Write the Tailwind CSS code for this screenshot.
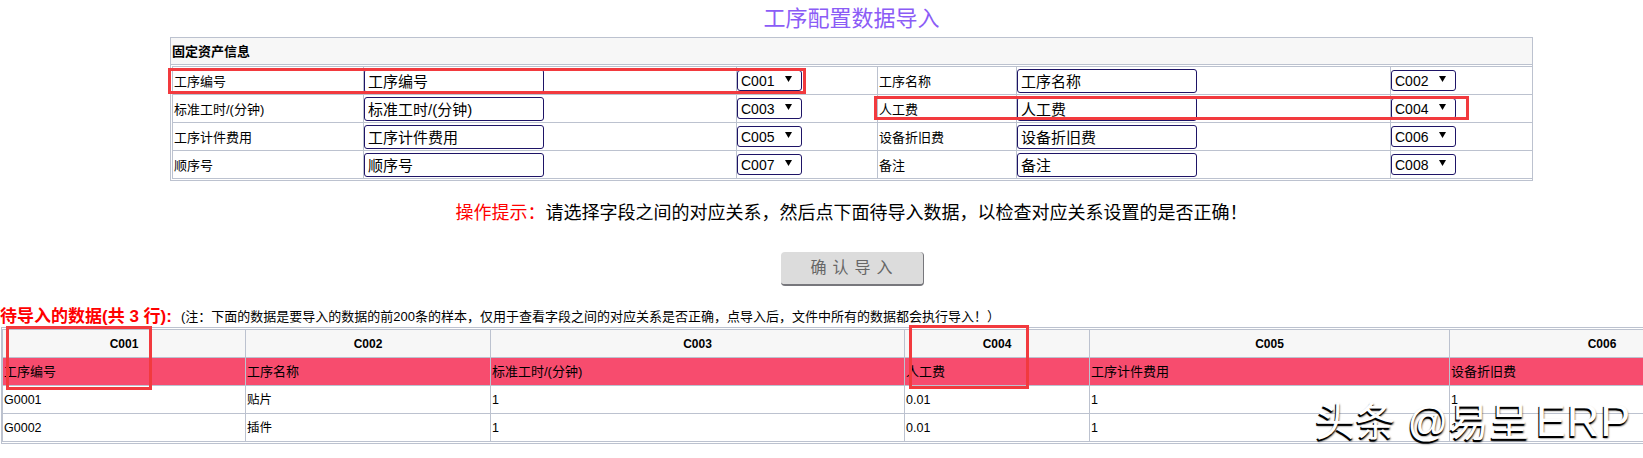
<!DOCTYPE html>
<html lang="zh-CN">
<head>
    <meta charset="UTF-8">
    <title>工序配置数据导入</title>
    <script src="https://cdn.jsdelivr.net/npm/@tailwindcss/browser@4"></script>
</head>
<body class="bg-white text-black font-['Liberation_Sans','Noto_Sans_CJK_SC',sans-serif]">
<div class="relative w-[1643px] h-[458px] overflow-hidden">

    <!-- config panel -->
    <div class="ml-[170px] w-[1363px]">
        <h1 class="h-[37px] flex items-center justify-center text-[22px] font-normal text-[#8b5cf6]">工序配置数据导入</h1>
        <div class="border border-[#bcc2cf] h-[144px]">
            <div class="h-[27px] bg-[#f7f7f7] border-b border-[#bcc2cf] flex items-center pl-[1px] pt-[2px] text-[13px] font-bold">固定资产信息</div>
            <table class="mt-[1px] ml-[1px] w-[1360px] table-fixed border-collapse border border-[#bcc2cf] text-[13px]">
                <colgroup>
                    <col class="w-[191px]"><col class="w-[373px]"><col class="w-[141px]">
                    <col class="w-[139px]"><col class="w-[374px]"><col class="w-[142px]">
                </colgroup>
                <tbody>
                    <tr class="h-[28px]">
                        <td class="border border-[#bcc2cf] pl-px pt-[3px]">工序编号</td>
                        <td class="border border-[#bcc2cf]"><input value="工序编号" class="block w-[180px] h-[24px] border border-[#1e1466] rounded-[3px] pl-[3px] text-[15px]"></td>
                        <td class="border border-[#bcc2cf]">
                            <div class="relative w-[65px]">
                                <select class="block appearance-none w-[65px] h-[21px] border border-[#1e1466] rounded-[3px] pl-[3px] text-[14px] bg-white"><option>C001</option></select>
                                <svg class="absolute right-[10px] top-[6px]" width="7" height="6" viewBox="0 0 7 6"><path d="M0 0h7L3.5 6z" fill="#000"/></svg>
                            </div>
                        </td>
                        <td class="border border-[#bcc2cf] pl-px pt-[3px]">工序名称</td>
                        <td class="border border-[#bcc2cf]"><input value="工序名称" class="block w-[180px] h-[24px] border border-[#1e1466] rounded-[3px] pl-[3px] text-[15px]"></td>
                        <td class="border border-[#bcc2cf]">
                            <div class="relative w-[65px]">
                                <select class="block appearance-none w-[65px] h-[21px] border border-[#1e1466] rounded-[3px] pl-[3px] text-[14px] bg-white"><option>C002</option></select>
                                <svg class="absolute right-[10px] top-[6px]" width="7" height="6" viewBox="0 0 7 6"><path d="M0 0h7L3.5 6z" fill="#000"/></svg>
                            </div>
                        </td>
                    </tr>
                    <tr class="h-[28px]">
                        <td class="border border-[#bcc2cf] pl-px pt-[3px]">标准工时/(分钟)</td>
                        <td class="border border-[#bcc2cf]"><input value="标准工时/(分钟)" class="block w-[180px] h-[24px] border border-[#1e1466] rounded-[3px] pl-[3px] text-[15px]"></td>
                        <td class="border border-[#bcc2cf]">
                            <div class="relative w-[65px]">
                                <select class="block appearance-none w-[65px] h-[21px] border border-[#1e1466] rounded-[3px] pl-[3px] text-[14px] bg-white"><option>C003</option></select>
                                <svg class="absolute right-[10px] top-[6px]" width="7" height="6" viewBox="0 0 7 6"><path d="M0 0h7L3.5 6z" fill="#000"/></svg>
                            </div>
                        </td>
                        <td class="border border-[#bcc2cf] pl-px pt-[3px]">人工费</td>
                        <td class="border border-[#bcc2cf]"><input value="人工费" class="block w-[180px] h-[24px] border border-[#1e1466] rounded-[3px] pl-[3px] text-[15px]"></td>
                        <td class="border border-[#bcc2cf]">
                            <div class="relative w-[65px]">
                                <select class="block appearance-none w-[65px] h-[21px] border border-[#1e1466] rounded-[3px] pl-[3px] text-[14px] bg-white"><option>C004</option></select>
                                <svg class="absolute right-[10px] top-[6px]" width="7" height="6" viewBox="0 0 7 6"><path d="M0 0h7L3.5 6z" fill="#000"/></svg>
                            </div>
                        </td>
                    </tr>
                    <tr class="h-[28px]">
                        <td class="border border-[#bcc2cf] pl-px pt-[3px]">工序计件费用</td>
                        <td class="border border-[#bcc2cf]"><input value="工序计件费用" class="block w-[180px] h-[24px] border border-[#1e1466] rounded-[3px] pl-[3px] text-[15px]"></td>
                        <td class="border border-[#bcc2cf]">
                            <div class="relative w-[65px]">
                                <select class="block appearance-none w-[65px] h-[21px] border border-[#1e1466] rounded-[3px] pl-[3px] text-[14px] bg-white"><option>C005</option></select>
                                <svg class="absolute right-[10px] top-[6px]" width="7" height="6" viewBox="0 0 7 6"><path d="M0 0h7L3.5 6z" fill="#000"/></svg>
                            </div>
                        </td>
                        <td class="border border-[#bcc2cf] pl-px pt-[3px]">设备折旧费</td>
                        <td class="border border-[#bcc2cf]"><input value="设备折旧费" class="block w-[180px] h-[24px] border border-[#1e1466] rounded-[3px] pl-[3px] text-[15px]"></td>
                        <td class="border border-[#bcc2cf]">
                            <div class="relative w-[65px]">
                                <select class="block appearance-none w-[65px] h-[21px] border border-[#1e1466] rounded-[3px] pl-[3px] text-[14px] bg-white"><option>C006</option></select>
                                <svg class="absolute right-[10px] top-[6px]" width="7" height="6" viewBox="0 0 7 6"><path d="M0 0h7L3.5 6z" fill="#000"/></svg>
                            </div>
                        </td>
                    </tr>
                    <tr class="h-[28px]">
                        <td class="border border-[#bcc2cf] pl-px pt-[3px]">顺序号</td>
                        <td class="border border-[#bcc2cf]"><input value="顺序号" class="block w-[180px] h-[24px] border border-[#1e1466] rounded-[3px] pl-[3px] text-[15px]"></td>
                        <td class="border border-[#bcc2cf]">
                            <div class="relative w-[65px]">
                                <select class="block appearance-none w-[65px] h-[21px] border border-[#1e1466] rounded-[3px] pl-[3px] text-[14px] bg-white"><option>C007</option></select>
                                <svg class="absolute right-[10px] top-[6px]" width="7" height="6" viewBox="0 0 7 6"><path d="M0 0h7L3.5 6z" fill="#000"/></svg>
                            </div>
                        </td>
                        <td class="border border-[#bcc2cf] pl-px pt-[3px]">备注</td>
                        <td class="border border-[#bcc2cf]"><input value="备注" class="block w-[180px] h-[24px] border border-[#1e1466] rounded-[3px] pl-[3px] text-[15px]"></td>
                        <td class="border border-[#bcc2cf]">
                            <div class="relative w-[65px]">
                                <select class="block appearance-none w-[65px] h-[21px] border border-[#1e1466] rounded-[3px] pl-[3px] text-[14px] bg-white"><option>C008</option></select>
                                <svg class="absolute right-[10px] top-[6px]" width="7" height="6" viewBox="0 0 7 6"><path d="M0 0h7L3.5 6z" fill="#000"/></svg>
                            </div>
                        </td>
                    </tr>
                </tbody>
            </table>
        </div>

        <!-- hint and confirm -->
        <p class="mt-[19px] h-[26px] flex items-center justify-center text-[18px] leading-none"><span class="text-[#ff0000]">操作提示&#65306;</span><span>请选择字段之间的对应关系&#65292;然后点下面待导入数据&#65292;以检查对应关系设置的是否正确&#65281;</span></p>
        <div class="mt-[26px] flex justify-center pl-[1px]">
            <button class="w-[143px] h-[34px] bg-[#dcdcdc] rounded-[4px] border-r border-b-2 border-[#77777c] text-[#666666] text-[16px] tracking-[6px] pl-[6px]">确认导入</button>
        </div>
    </div>

    <!-- data to import -->
    <div class="mt-[21px] h-[20px] flex items-center whitespace-nowrap">
        <span class="text-[17px] font-bold text-[#ff0000]">待导入的数据(共 3 行):</span>
        <span class="ml-[9px] text-[13px]">(注&#65306;下面的数据是要导入的数据的前200条的样本&#65292;仅用于查看字段之间的对应关系是否正确&#65292;点导入后&#65292;文件中所有的数据都会执行导入&#65281;&#65289;</span>
    </div>
    <div class="ml-px w-[1800px] border-y border-l border-[#bcc2cf] pt-px pb-px">
        <table class="w-[1752px] table-fixed border-collapse border border-[#bcc2cf] text-[13px]">
            <colgroup>
                <col class="w-[243px]"><col class="w-[245px]"><col class="w-[414px]">
                <col class="w-[185px]"><col class="w-[360px]"><col class="w-[305px]">
            </colgroup>
            <tbody>
                <tr class="h-[28px] bg-[#f7f7f7] text-[12px] font-bold text-center">
                    <td class="border border-[#bcc2cf]">C001</td>
                    <td class="border border-[#bcc2cf]">C002</td>
                    <td class="border border-[#bcc2cf]">C003</td>
                    <td class="border border-[#bcc2cf]">C004</td>
                    <td class="border border-[#bcc2cf]">C005</td>
                    <td class="border border-[#bcc2cf]">C006</td>
                </tr>
                <tr class="h-[28px] bg-[#f74c6e]">
                    <td class="border border-[#bcc2cf] pl-px">工序编号</td>
                    <td class="border border-[#bcc2cf] pl-px">工序名称</td>
                    <td class="border border-[#bcc2cf] pl-px">标准工时/(分钟)</td>
                    <td class="border border-[#bcc2cf] pl-px">人工费</td>
                    <td class="border border-[#bcc2cf] pl-px">工序计件费用</td>
                    <td class="border border-[#bcc2cf] pl-px">设备折旧费</td>
                </tr>
                <tr class="h-[28px] text-[12.5px]">
                    <td class="border border-[#bcc2cf] pl-px pt-px">G0001</td>
                    <td class="border border-[#bcc2cf] pl-px pt-px">贴片</td>
                    <td class="border border-[#bcc2cf] pl-px pt-px">1</td>
                    <td class="border border-[#bcc2cf] pl-px pt-px">0.01</td>
                    <td class="border border-[#bcc2cf] pl-px pt-px">1</td>
                    <td class="border border-[#bcc2cf] pl-px pt-px">1</td>
                </tr>
                <tr class="h-[28px] text-[12.5px]">
                    <td class="border border-[#bcc2cf] pl-px pt-px">G0002</td>
                    <td class="border border-[#bcc2cf] pl-px pt-px">插件</td>
                    <td class="border border-[#bcc2cf] pl-px pt-px">1</td>
                    <td class="border border-[#bcc2cf] pl-px pt-px">0.01</td>
                    <td class="border border-[#bcc2cf] pl-px pt-px">1</td>
                    <td class="border border-[#bcc2cf] pl-px pt-px">1</td>
                </tr>
            </tbody>
        </table>
    </div>

    <!-- red annotation boxes drawn over the screenshot -->
    <div class="absolute left-[168px] top-[68px] w-[638px] h-[26px] border-[3px] border-[#f23a3e]"></div>
    <div class="absolute left-[874px] top-[96px] w-[595px] h-[24px] border-[3px] border-[#f23a3e]"></div>
    <div class="absolute left-[6px] top-[326px] w-[146px] h-[64px] border-[3px] border-[#f23a3e]"></div>
    <div class="absolute left-[909px] top-[325px] w-[120px] h-[64px] border-[3px] border-[#f23a3e]"></div>

    <!-- watermark -->
    <div class="absolute left-[1315px] top-[398px] text-[40px] leading-[46px] tracking-[0.5px] text-white whitespace-nowrap [text-shadow:-1px_2px_0_#000,0_2px_2px_#000]">头条 @易呈<span class="ml-[6px] text-[45px] tracking-[1px]">ERP</span></div>
</div>
</body>
</html>
